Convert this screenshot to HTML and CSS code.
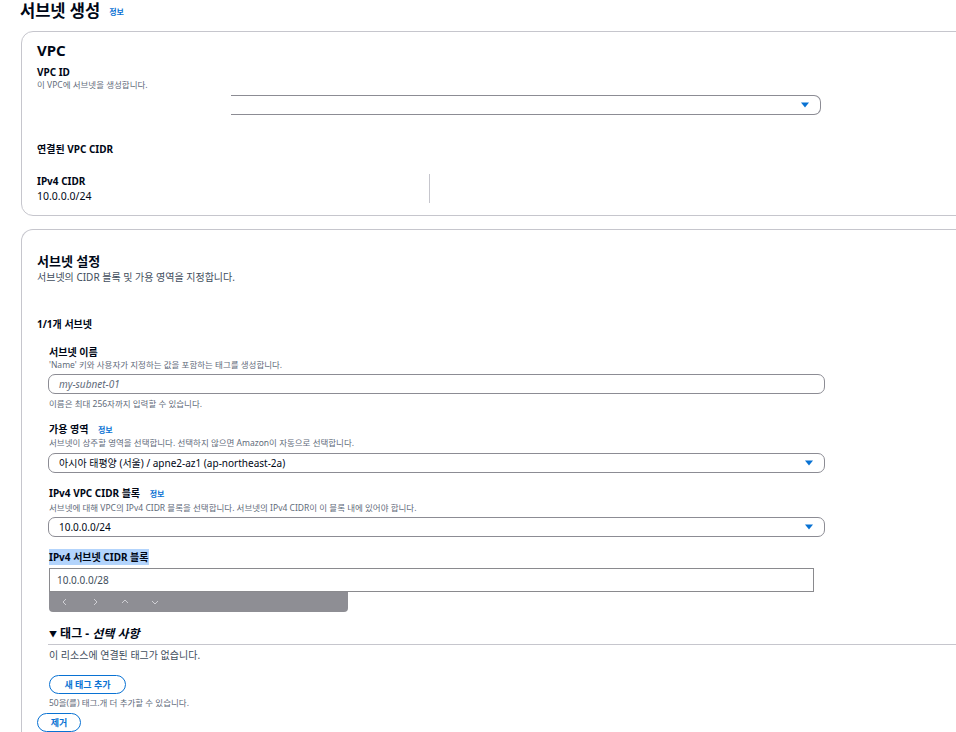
FILE: index.html
```html
<!DOCTYPE html>
<html lang="ko">
<head>
<meta charset="utf-8">
<title>서브넷 생성</title>
<link rel="stylesheet" href="styles.css">
</head>
<body>
<div class="page">
  <div class="page-title">
    <h1 class="title">서브넷 생성</h1>
    <a class="info info-title">정보</a>
  </div>

  <section class="card card-vpc">
    <h2 class="card-heading">VPC</h2>
    <div class="label label-vpcid">VPC ID</div>
    <div class="desc">이 VPC에 서브넷을 생성합니다.</div>
    <div class="select select-vpc">
      <span class="select-text"></span>
      <svg class="caret" width="8" height="6" viewBox="0 0 8 6"><path d="M0 0.5 H8 L4 5.5 Z" fill="#0972d3"/></svg>
    </div>
    <div class="label label-cidr-head">연결된 VPC CIDR</div>
    <div class="cidr-row">
      <div class="cidr-col">
        <div class="label">IPv4 CIDR</div>
        <div class="value">10.0.0.0/24</div>
      </div>
      <div class="cidr-col cidr-col-divided"></div>
    </div>
  </section>

  <section class="card card-subnet">
    <h2 class="section-heading">서브넷 설정</h2>
    <div class="section-desc">서브넷의 CIDR 블록 및 가용 영역을 지정합니다.</div>
    <div class="label label-count">1/1개 서브넷</div>

    <div class="fields">
      <div class="label label-first">서브넷 이름</div>
      <div class="desc">'Name' 키와 사용자가 지정하는 값을 포함하는 태그를 생성합니다.</div>
      <div class="input input-name"><span class="placeholder">my-subnet-01</span></div>
      <div class="hint">이름은 최대 256자까지 입력할 수 있습니다.</div>

      <div class="label label-next">가용 영역 <a class="info">정보</a></div>
      <div class="desc">서브넷이 상주할 영역을 선택합니다. 선택하지 않으면 Amazon이 자동으로 선택합니다.</div>
      <div class="select select-field">
        <span class="select-text">아시아 태평양 (서울) / apne2-az1 (ap-northeast-2a)</span>
        <svg class="caret" width="8" height="6" viewBox="0 0 8 6"><path d="M0 0.5 H8 L4 5.5 Z" fill="#0972d3"/></svg>
      </div>

      <div class="label label-next2">IPv4 VPC CIDR 블록 <a class="info">정보</a></div>
      <div class="desc desc-tight">서브넷에 대해 VPC의 IPv4 CIDR 블록을 선택합니다. 서브넷의 IPv4 CIDR이 이 블록 내에 있어야 합니다.</div>
      <div class="select select-field select-cidr">
        <span class="select-text">10.0.0.0/24</span>
        <svg class="caret" width="8" height="6" viewBox="0 0 8 6"><path d="M0 0.5 H8 L4 5.5 Z" fill="#0972d3"/></svg>
      </div>

      <div class="label label-highlight"><span class="selected">IPv4 서브넷 CIDR 블록</span></div>
      <div class="input input-cidr"><span class="input-value">10.0.0.0/28</span></div>
      <div class="stepper">
        <svg class="step" width="10" height="10" viewBox="0 0 10 10"><path d="M6 2 L3 5 L6 8" fill="none" stroke="#cfcfd4" stroke-width="1"/></svg>
        <svg class="step" width="10" height="10" viewBox="0 0 10 10"><path d="M4 2 L7 5 L4 8" fill="none" stroke="#cfcfd4" stroke-width="1"/></svg>
        <svg class="step" width="10" height="10" viewBox="0 0 10 10"><path d="M2 6 L5 3 L8 6" fill="none" stroke="#cfcfd4" stroke-width="1"/></svg>
        <svg class="step" width="10" height="10" viewBox="0 0 10 10"><path d="M2 4 L5 7 L8 4" fill="none" stroke="#cfcfd4" stroke-width="1"/></svg>
      </div>

      <div class="tags-heading"><span class="tri">▼</span> 태그 - <em>선택 사항</em></div>
      <div class="tags-empty">이 리소스에 연결된 태그가 없습니다.</div>
      <button class="btn btn-add" type="button">새 태그 추가</button>
      <div class="hint hint-tags">50을(를) 태그.개 더 추가할 수 있습니다.</div>
      <button class="btn btn-remove" type="button">제거</button>
    </div>
  </section>
</div>
</body>
</html>
```

FILE: styles.css
```css
html, body {
  margin: 0;
  padding: 0;
  overflow: hidden;
  background: #ffffff;
}

body {
  font-family: "Noto Sans", "Noto Sans CJK KR", sans-serif;
  color: #000716;
}

.page {
  width: 1060px;
  padding-left: 21px;
}

.page-title {
  display: flex;
  align-items: baseline;
  gap: 9px;
  height: 31px;
  margin-left: -1px;
  padding-top: 2px;
  box-sizing: border-box;
}

.title {
  margin: 0;
  font-size: 16.5px;
  line-height: 17px;
  font-weight: 700;
}

.info {
  color: #0972d3;
  font-size: 8px;
  font-weight: 700;
}

.info-title {
  position: relative;
  top: -2px;
}

.card {
  border: 1px solid #c6c6cd;
  border-radius: 12px;
  padding-left: 15px;
  box-sizing: border-box;
}

.card-vpc {
  padding-top: 8px;
  padding-bottom: 12px;
}

.card-heading {
  margin: 0;
  font-size: 15px;
  line-height: 20px;
  font-weight: 700;
}

.label {
  font-size: 10px;
  line-height: 14px;
  font-weight: 700;
}

.label-vpcid {
  margin-top: 5px;
}

.desc {
  font-size: 8.5px;
  line-height: 12px;
  color: #5f6b7a;
}

.desc-tight {
  margin-top: 1px;
}

.select {
  display: flex;
  align-items: center;
  justify-content: space-between;
  height: 20px;
  box-sizing: border-box;
  border: 1px solid #8c8c94;
  border-radius: 7px;
  padding: 0 11px 0 10px;
}

.select-vpc {
  margin-top: 4px;
  margin-left: 194px;
  width: 590px;
  border-left: none;
  border-top-left-radius: 0;
  border-bottom-left-radius: 0;
}

.select-text {
  font-size: 10px;
  line-height: 18px;
}

.caret {
  display: block;
}

.label-cidr-head {
  margin-top: 27px;
}

.cidr-row {
  display: flex;
  margin-top: 18px;
}

.cidr-col {
  width: 392px;
}

.cidr-col-divided {
  border-left: 1px solid #c6c6cd;
  height: 29px;
}

.value {
  font-size: 10.5px;
  line-height: 14px;
  margin-top: 1px;
}

.card-subnet {
  margin-top: 13px;
  padding-top: 22px;
  border-bottom-left-radius: 0;
  border-bottom-right-radius: 0;
  border-bottom: none;
  padding-bottom: 20px;
}

.section-heading {
  margin: 0;
  font-size: 13px;
  line-height: 18px;
  font-weight: 700;
}

.section-desc {
  font-size: 10px;
  line-height: 14px;
  color: #414d5c;
}

.label-count {
  margin-top: 33px;
}

.fields {
  margin-left: 11px;
}

.fields > .label,
.fields > .desc,
.fields > .hint,
.fields > .tags-heading,
.fields > .tags-empty {
  padding-left: 1px;
}

.label-first {
  margin-top: 14px;
}

.input {
  box-sizing: border-box;
  display: flex;
  align-items: center;
}

.input-name {
  margin-top: 3px;
  width: 777px;
  height: 20px;
  border: 1px solid #8c8c94;
  border-radius: 7px;
  padding-left: 10px;
}

.placeholder {
  font-size: 10px;
  font-style: italic;
  color: #5f6b7a;
}

.hint {
  margin-top: 4px;
  font-size: 8.5px;
  line-height: 12px;
  color: #5f6b7a;
}

.label-next {
  margin-top: 12px;
}

.label-next .info,
.label-next2 .info {
  margin-left: 7px;
}

.select-field {
  margin-top: 4px;
  width: 777px;
}

.select-cidr {
  margin-top: 3px;
}

.label-next2 {
  margin-top: 13px;
}

.label-highlight {
  margin-top: 12px;
  line-height: 16px;
}

.selected {
  background: #b3d4fc;
  display: inline-block;
  line-height: 16px;
}

.input-cidr {
  margin-top: 3px;
  width: 765px;
  height: 24px;
  border: 1px solid #8a8a8e;
  padding-left: 7px;
  margin-left: 1px;
}

.input-value {
  font-size: 10px;
  color: #414d5c;
}

.stepper {
  width: 299px;
  height: 20px;
  background: #8e8e94;
  border-radius: 0 0 4px 4px;
  display: flex;
  align-items: center;
  gap: 20px;
  padding-left: 11px;
  box-sizing: border-box;
  margin-left: 1px;
}

.step {
  display: block;
}

.tags-heading {
  margin-top: 14px;
  height: 18px;
  line-height: 16px;
  font-size: 12px;
  font-weight: 700;
  border-bottom: 1px solid #c6c6cd;
}

.tags-heading em {
  font-style: italic;
}

.tri {
  font-size: 8px;
  position: relative;
  top: -1px;
}

.tags-empty {
  margin-top: 4px;
  font-size: 10px;
  line-height: 12px;
  color: #414d5c;
}

.btn {
  display: block;
  font-family: "Noto Sans", "Noto Sans CJK KR", sans-serif;
  background: #ffffff;
  border: 1.5px solid #0972d3;
  border-radius: 10px;
  color: #0972d3;
  font-size: 9px;
  font-weight: 700;
  height: 19px;
  padding: 0;
  box-sizing: border-box;
}

.btn-add {
  margin-top: 14px;
  margin-left: 1px;
  width: 77px;
}

.hint-tags {
  margin-top: 3px;
  line-height: 11px;
}

.btn-remove {
  margin-top: 5px;
  margin-left: -11px;
  width: 44px;
}
```
